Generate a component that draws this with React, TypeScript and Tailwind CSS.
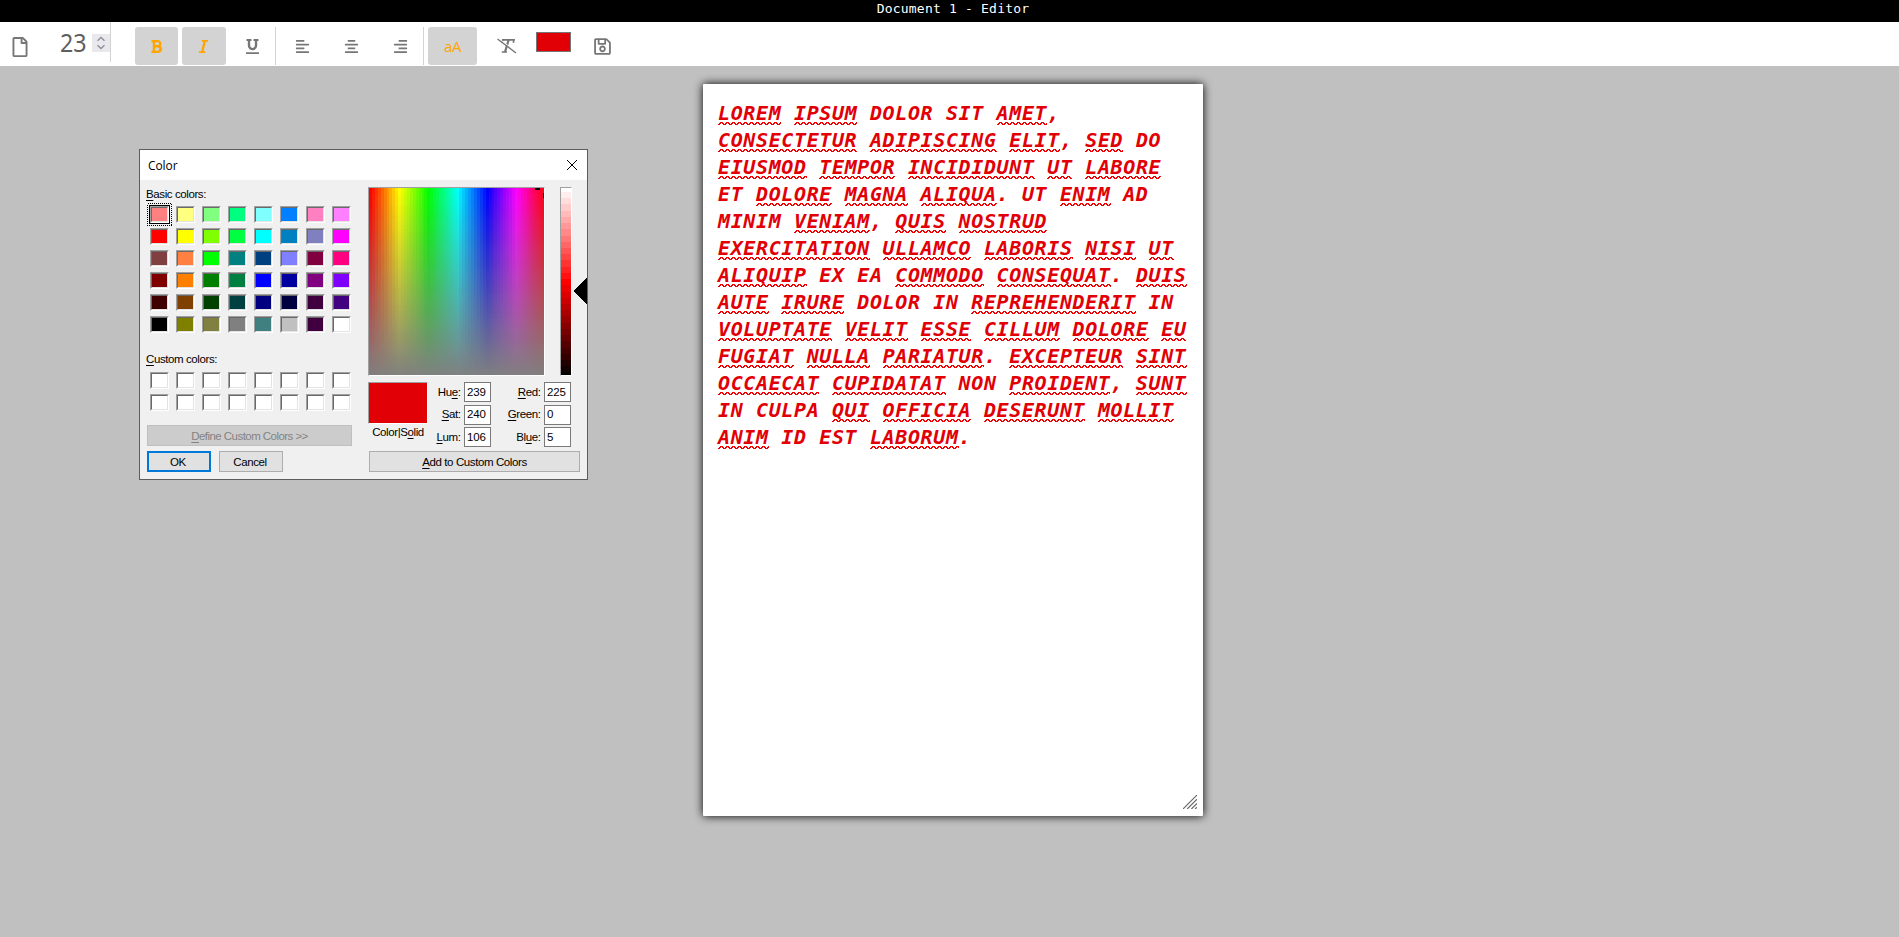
import React from "react";
import { FaAlignCenter, FaAlignLeft, FaAlignRight, FaBold, FaItalic, FaRegFile, FaRegSave, FaUnderline } from "react-icons/fa";

const BASIC = [
  "#ff8080", "#ffff80", "#80ff80", "#00ff80", "#80ffff", "#0080ff", "#ff80c0", "#ff80ff",
  "#ff0000", "#ffff00", "#80ff00", "#00ff40", "#00ffff", "#0080c0", "#8080c0", "#ff00ff",
  "#804040", "#ff8040", "#00ff00", "#008080", "#004080", "#8080ff", "#800040", "#ff0080",
  "#800000", "#ff8000", "#008000", "#008040", "#0000ff", "#0000a0", "#800080", "#8000ff",
  "#400000", "#804000", "#004000", "#004040", "#000080", "#000040", "#400040", "#400080",
  "#000000", "#808000", "#808040", "#808080", "#408080", "#c0c0c0", "#400040", "#ffffff",
];

// Words between underscores are flagged by the spell checker.
const LINES = [
  "_LOREM_ _IPSUM_ DOLOR SIT _AMET_,",
  "_CONSECTETUR_ _ADIPISCING_ _ELIT_, _SED_ DO",
  "_EIUSMOD_ _TEMPOR_ _INCIDIDUNT_ _UT_ _LABORE_",
  "ET _DOLORE_ _MAGNA_ _ALIQUA_. UT _ENIM_ AD",
  "MINIM _VENIAM_, _QUIS_ _NOSTRUD_",
  "_EXERCITATION_ _ULLAMCO_ _LABORIS_ _NISI_ _UT_",
  "_ALIQUIP_ EX EA _COMMODO_ _CONSEQUAT_. _DUIS_",
  "_AUTE_ _IRURE_ DOLOR IN _REPREHENDERIT_ IN",
  "_VOLUPTATE_ _VELIT_ _ESSE_ _CILLUM_ _DOLORE_ _EU_",
  "_FUGIAT_ _NULLA_ _PARIATUR_. _EXCEPTEUR_ _SINT_",
  "_OCCAECAT_ _CUPIDATAT_ NON _PROIDENT_, _SUNT_",
  "IN CULPA _QUI_ _OFFICIA_ _DESERUNT_ _MOLLIT_",
  "_ANIM_ ID EST _LABORUM_.",
];

function Misspelled({ word }: { word: string }) {
  const id = React.useId();
  return (
    <span className="relative">
      {word}
      <svg className="absolute left-0 top-[21px] h-[3px] w-full" shapeRendering="crispEdges">
        <defs>
          <pattern id={id} width="6" height="3" patternUnits="userSpaceOnUse">
            <path d="M2 0h3v1h-3zM1 1h2v1h-2zM4 1h2v1h-2zM0 2h2v1h-2zM5 2h1v1h-1z" fill="#f00000" />
          </pattern>
        </defs>
        <rect width="100%" height="3" fill={`url(#${id})`} />
      </svg>
    </span>
  );
}

function Swatch({ color, selected = false }: { color: string; selected?: boolean }) {
  return (
    <div className="relative h-[17px] w-[19px] border border-t-[#a0a0a0] border-l-[#a0a0a0] border-r-white border-b-white">
      <div
        className="h-[15px] w-[17px] border border-t-[#696969] border-l-[#696969] border-r-[#e3e3e3] border-b-[#e3e3e3]"
        style={{ backgroundColor: color, backgroundClip: "padding-box" }}
      />
      {selected && (
        <>
          <div className="absolute -top-[2px] -left-[2px] h-[19px] w-[21px] border border-black" />
          <svg className="absolute -top-[4px] -left-[4px] h-[23px] w-[25px]" shapeRendering="crispEdges">
            <rect x="0.5" y="0.5" width="24" height="22" fill="none" stroke="#000" strokeDasharray="1 1" />
          </svg>
        </>
      )}
    </div>
  );
}

function Spectrum() {
  const cols = Array.from({ length: 60 }, (_, i) => i);
  return (
    <div className="h-[189px] w-[177px] border border-t-[#a0a0a0] border-l-[#a0a0a0] border-r-white border-b-white">
      <svg width="175" height="187" shapeRendering="crispEdges">
        {cols.map((i) => (
          <rect key={i} x={Math.round((i * 175) / 60)} width={4} height={187} fill={`hsl(${i * 6} 100% 50%)`} />
        ))}
        {cols.map((i) => (
          <rect key={i} y={Math.round((i * 187) / 60)} width={175} height={Math.round(((i + 1) * 187) / 60) - Math.round((i * 187) / 60)} fill="#808080" fillOpacity={i / 60} />
        ))}
        <rect x="166" y="0" width="5" height="2" />
        <rect x="174" y="5" width="1" height="5" />
      </svg>
    </div>
  );
}

function Luminosity() {
  const steps = Array.from({ length: 31 }, (_, i) => i);
  return (
    <div className="h-[189px] w-[12px] border border-t-[#a0a0a0] border-l-[#a0a0a0] border-r-white border-b-white">
      <svg width="10" height="187" shapeRendering="crispEdges">
        {steps.map((i) => (
          <rect key={i} y={i === 0 ? 0 : Math.round(4 + (i - 1) * 6.22)} width="10" height="187" fill={`hsl(0 100% ${((240 - 8 * i) / 240) * 100}%)`} />
        ))}
      </svg>
    </div>
  );
}

function Field({ before = "", accel, after = "", value, width }: { before?: string; accel: string; after?: string; value: string; width: string }) {
  return (
    <div className="flex h-5 items-center justify-end">
      <span className={`${width} mr-[3.5px] text-right whitespace-nowrap`}>
        {before}<u>{accel}</u>{after}:
      </span>
      <span className="flex h-5 w-[27px] items-center border border-[#7a7a7a] bg-white pl-[2px] tracking-[-0.1px]">{value}</span>
    </div>
  );
}

function ColorDialog() {
  return (
    <section className="absolute left-[139px] top-[149px] flex h-[331px] w-[449px] flex-col border border-[#5c5c5c] bg-[#f0f0f0] font-['Liberation_Sans',sans-serif] text-[11.5px] leading-[15px] tracking-[-0.4px] text-black [&_u]:underline-offset-2">
      <header className="flex h-[30px] shrink-0 items-center justify-between bg-white pr-[10px] pl-2">
        <span className="font-['Open_Sans',sans-serif] text-[12px] tracking-[-0.1px]">Color</span>
        <svg width="10" height="10" viewBox="0 0 10 10" stroke="#000" strokeWidth="1"><path d="M0 0L10 10M10 0L0 10" /></svg>
      </header>
      <div className="flex flex-1">
        <div className="w-[228px] shrink-0 pt-[7px] pl-[7px]">
          <div className="-ml-px h-[19px]"><u>B</u>asic colors:</div>
          <div className="ml-[3px] grid w-[208px] grid-cols-[repeat(8,26px)] auto-rows-[22px]">
            {BASIC.map((c, i) => <Swatch key={i} color={c} selected={i === 0} />)}
          </div>
          <div className="-ml-px mt-[14px] h-[20px]"><u>C</u>ustom colors:</div>
          <div className="ml-[3px] grid w-[208px] grid-cols-[repeat(8,26px)] auto-rows-[22px]">
            {Array.from({ length: 16 }, (_, i) => <Swatch key={i} color="#ffffff" />)}
          </div>
          <div className="mt-[9px] flex h-[21px] w-[205px] items-center justify-center border border-[#bfbfbf] bg-[#cccccc] pt-px text-[#838383]">
            <span className="tracking-[-0.55px]"><u>D</u>efine Custom Colors &gt;&gt;</span>
          </div>
          <div className="mt-[5px] flex gap-2">
            <div className="flex h-[21px] w-16 items-center justify-center border-2 border-[#0078d7] bg-[#e1e1e1] pt-px pr-0.5">OK</div>
            <div className="flex h-[21px] w-16 items-center justify-center border border-[#adadad] bg-[#e1e1e1] pt-px pr-0.5">Cancel</div>
          </div>
        </div>
        <div className="flex flex-1 flex-col pt-[7px]">
          <div className="flex">
            <Spectrum />
            <div className="w-[15px]" />
            <Luminosity />
            <svg className="mt-[90px] ml-px" width="14" height="28" shapeRendering="crispEdges"><path d="M0 14L14 0V28z" /></svg>
          </div>
          <div className="mt-[6px] flex">
            <div className="w-[60px]">
              <div className="h-[42px] w-[60px] border border-t-[#a0a0a0] border-l-[#a0a0a0] border-r-white border-b-white bg-[#e10005] bg-clip-padding" />
              <div className="mt-px text-center whitespace-nowrap">Color|S<u>o</u>lid</div>
            </div>
            <div className="flex w-[63px] flex-col gap-[2.5px]">
              <Field before="Hu" accel="e" value="239" width="w-8" />
              <Field accel="S" after="at" value="240" width="w-8" />
              <Field accel="L" after="um" value="106" width="w-8" />
            </div>
            <div className="flex w-20 flex-col gap-[2.5px]">
              <Field accel="R" after="ed" value="225" width="w-12" />
              <Field accel="G" after="reen" value="0" width="w-12" />
              <Field before="Bl" accel="u" after="e" value="5" width="w-12" />
            </div>
          </div>
          <div className="mt-1 ml-px flex h-[21px] w-[211px] items-center justify-center border border-[#adadad] bg-[#e1e1e1] pt-px">
            <span><u>A</u>dd to Custom Colors</span>
          </div>
        </div>
      </div>
    </section>
  );
}

function ClearFormatIcon() {
  return (
    <svg width="20" height="16" viewBox="0 0 20 16" fill="none" stroke="currentColor" className="shrink-0">
      <path d="M5 4.800L5.700 1.900H17L16.300 4.800M4.800 14H10" strokeWidth="1.7" />
      <path d="M11.600 2L8 14" strokeWidth="2.200" />
      <path d="M1.300 0.200L19.800 14.200" stroke="#fff" strokeWidth="1" />
      <path d="M0.500 1L19 15" strokeWidth="1.400" />
    </svg>
  );
}

function Toolbar() {
  return (
    <nav className="flex h-11 items-start bg-white text-[#767676]">
      <div className="flex w-[60px] pt-[15px] pl-[10px]"><FaRegFile size={20} /></div>
      <div className="flex h-10 w-[51px] border-r border-[#d3d3d3] pt-3">
        <span className="w-8 shrink-0 origin-left scale-x-[0.93] font-['Noto_Sans',sans-serif] text-[25px] leading-[17px] text-[#5f5f5f]">23</span>
        <svg width="18" height="18" className="shrink-0" fill="none" stroke="#8f8f9d" strokeWidth="1.4">
          <rect width="18" height="18" fill="#e9e9ed" stroke="none" />
          <path d="M5.5 6.7L9 3.5L12.500 6.7M5.500 11.300L9 14.500L12.500 11.300" />
        </svg>
      </div>
      <div className="mt-[5px] ml-6 flex h-[38px]">
        <div className="flex w-[43px] items-center justify-center rounded-[3px] bg-[#d3d3d3] text-[#ffa500]"><FaBold size={15} /></div>
        <div className="ml-1 flex w-11 items-center justify-center rounded-[3px] bg-[#d3d3d3] pr-px text-[#ffa500]"><FaItalic size={15} /></div>
        <div className="ml-1 flex w-[46px] items-center justify-center border-r border-[#d3d3d3]"><FaUnderline size={15} /></div>
        <div className="flex w-[52px] items-center justify-center"><FaAlignLeft size={15} /></div>
        <div className="flex w-[46px] items-center justify-center"><FaAlignCenter size={15} /></div>
        <div className="flex w-[50px] items-center justify-center border-r border-[#d3d3d3] pl-1"><FaAlignRight size={15} /></div>
        <div className="ml-1 flex w-[49px] items-center justify-center rounded-[3px] bg-[#d3d3d3] font-['Open_Sans',sans-serif] text-[15px] tracking-[-0.3px] text-[#ffa500]">aA</div>
        <div className="ml-5 flex w-5 items-center"><ClearFormatIcon /></div>
        <div className="mt-[5px] ml-[19px] h-5 w-[35px] border border-[#767676] bg-[#e10005]" />
        <div className="ml-[22px] flex items-center"><FaRegSave size={19} /></div>
      </div>
    </nav>
  );
}

export default function App() {
  return (
    <div className="relative flex h-[937px] w-[1899px] flex-col overflow-hidden bg-[#c0c0c0]">
      <header className="flex h-[22px] shrink-0 justify-center bg-black pl-[7px] font-['DejaVu_Sans_Mono',monospace] text-[13px] leading-[18px] tracking-[0.2px] text-white">
        Document 1 - Editor
      </header>
      <Toolbar />
      <main className="flex pt-[18px] pl-[703px]">
        <article className="flex h-[732px] w-[500px] flex-col rounded-[1px] bg-white pt-[16px] pl-[15px] font-['DejaVu_Sans_Mono',monospace] text-[20px] leading-[27px] font-bold tracking-[0.62px] text-[#e10005] italic shadow-[0_0_10px_#000]">
          {LINES.map((line) => (
            <div key={line} className="h-[27px] whitespace-pre">
              {line.split("_").map((part, i) => (i % 2 ? <Misspelled key={i} word={part} /> : <span key={i}>{part}</span>))}
            </div>
          ))}
          <svg className="mt-auto mr-[6px] mb-[7px] self-end" width="14" height="14" viewBox="0 0 15 15" stroke="#666" strokeWidth="1.2">
            <path d="M0 15L15 0M4.500 15L15 4.500M9 15L15 9M13 15L15 13" />
          </svg>
        </article>
      </main>
      <ColorDialog />
    </div>
  );
}
